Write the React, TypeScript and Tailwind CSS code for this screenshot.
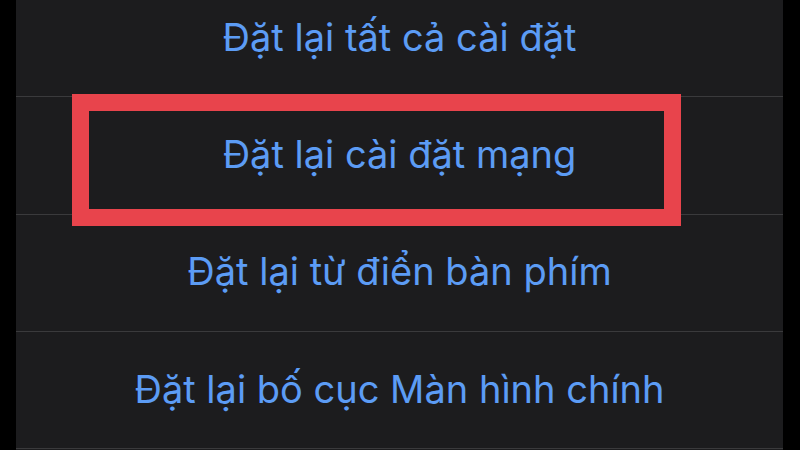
const ROWS = [
  'Đặt lại tất cả cài đặt',
  'Đặt lại cài đặt mạng',
  'Đặt lại từ điển bàn phím',
  'Đặt lại bố cục Màn hình chính',
]

export default function App() {
  return (
    <div className="w-[800px] h-[450px] overflow-hidden bg-black flex pl-[16px] pr-[17px]">
      <div className="relative flex-1 bg-[#1c1c1e]">
        <div className="mt-[-20px] flex flex-col">
          {ROWS.map((label) => (
            <div
              key={label}
              className="h-[117.3px] flex items-center justify-center border-b border-[#3a3a3c]"
            >
              <span
                className="text-[#5c9cf5] text-[38px] leading-none pb-[3px]"
                style={{ fontFamily: '"Inter", "Noto Sans", sans-serif' }}
              >
                {label}
              </span>
            </div>
          ))}
        </div>
        {/* highlight annotation */}
        <div className="absolute left-[56px] top-[94px] w-[609px] h-[132px] border-[17px] border-[#e8444c]" />
      </div>
    </div>
  )
}
